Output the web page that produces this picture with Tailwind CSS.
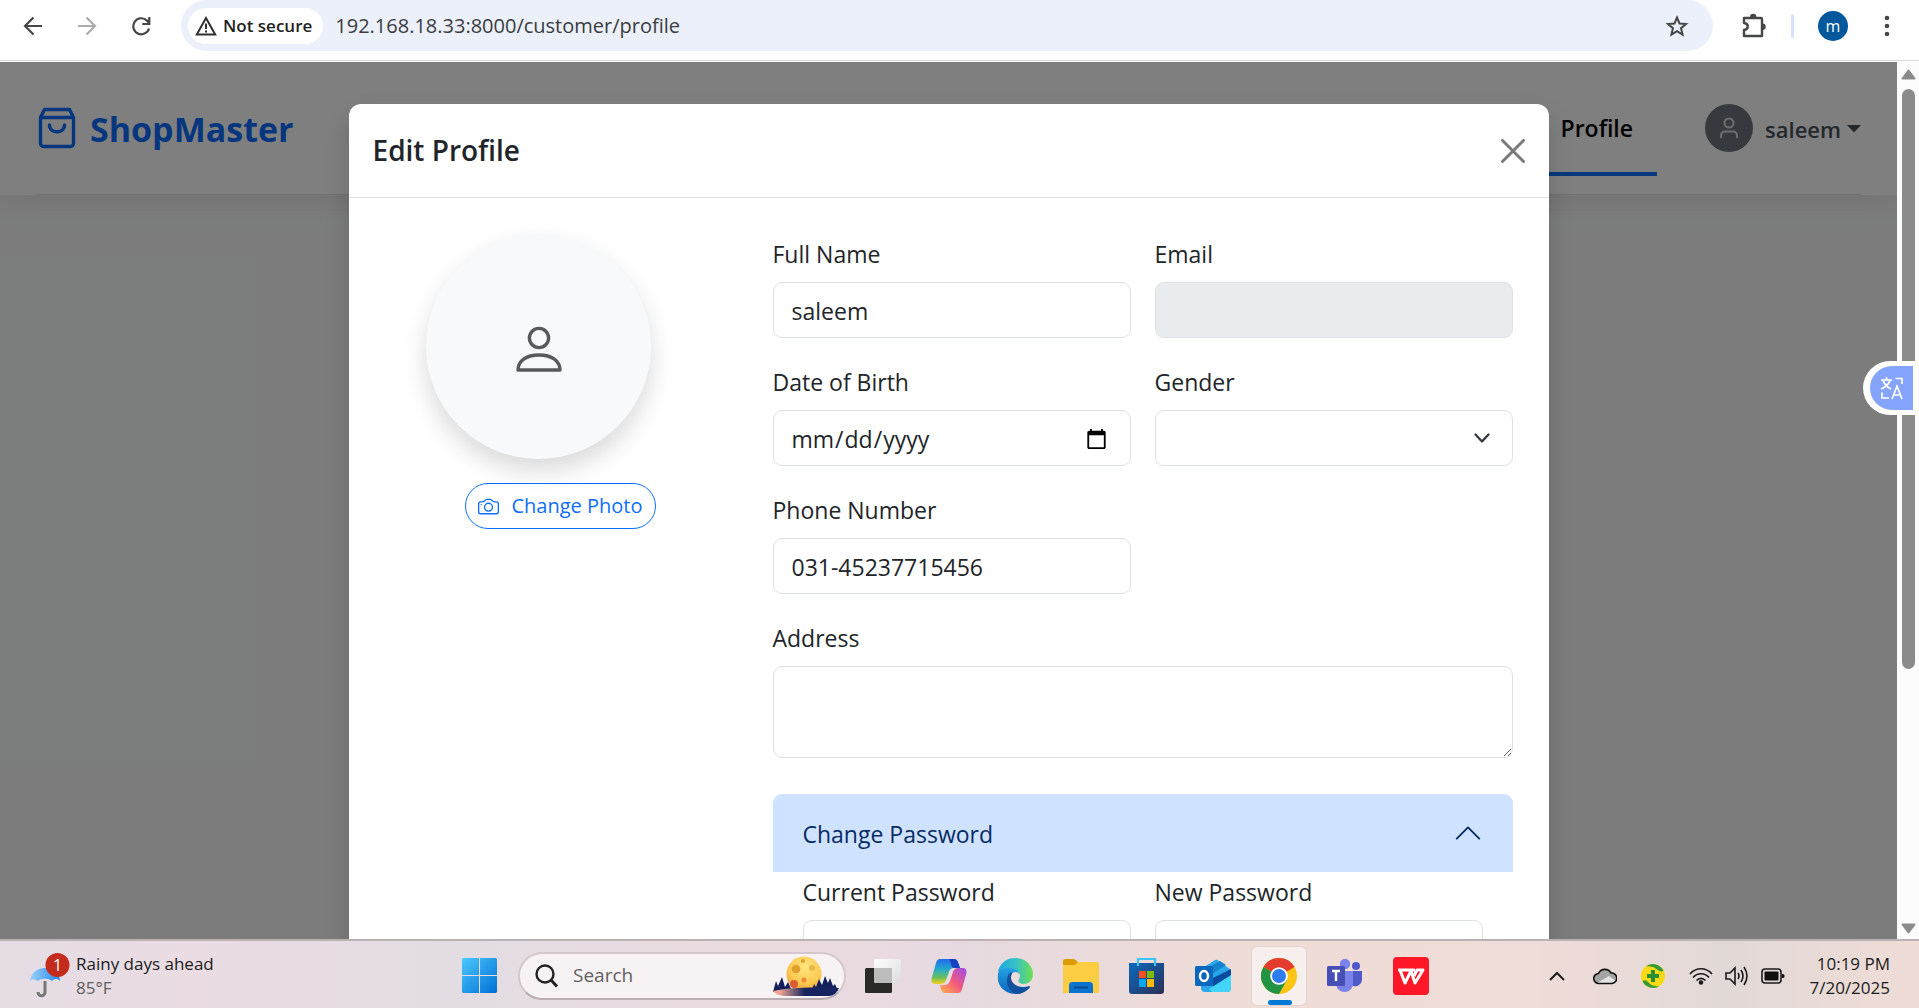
<!DOCTYPE html>
<html lang="en">
<head>
<meta charset="utf-8">
<title>ShopMaster - Profile</title>
<script src="https://cdn.jsdelivr.net/npm/@tailwindcss/browser@4"></script>
</head>
<body class="flex h-screen flex-col overflow-hidden bg-white font-['Open_Sans','Noto_Sans',sans-serif] text-[#212529]">

<!-- Browser toolbar -->
<div class="flex h-[61px] shrink-0 items-start border-b border-[#dcdcdc]">
  <div class="flex h-[51px] w-full items-center pr-[26px]">
    <button aria-label="Back" class="ml-[23px]"><svg class="size-5" viewBox="0 0 20 20" fill="none" stroke="#454746" stroke-width="2.2"><path d="M19 10H3M10.500 1.500 2 10l8.500 8.500"/></svg></button>
    <button aria-label="Forward" class="ml-[34px]"><svg class="size-5" viewBox="0 0 20 20" fill="none" stroke="#acacac" stroke-width="2.200"><path d="M1 10h16M9.500 1.500 18 10l-8.500 8.500"/></svg></button>
    <button aria-label="Reload" class="ml-[34px]"><svg class="size-5" viewBox="0 0 20 20" fill="none" stroke="#454746" stroke-width="2.200"><path d="M18 12.500A8 8 0 1 1 16 4.600L18 7M18.300 1v7h-7"/></svg></button>
    <div class="ml-[30px] flex h-[51px] flex-1 items-center rounded-full bg-[#ebf0fa] pr-[24px] pl-[7px]">
      <button class="flex h-9 items-center gap-[6px] rounded-full bg-white pr-[11px] pl-[7px] text-[17px] leading-6 font-semibold whitespace-nowrap text-[#1f1f1f]">
        <svg class="size-[22px]" viewBox="0 0 22 22" fill="none" stroke="#303030" stroke-width="2"><path d="M11 3 1.800 19.500h18.400z"/><path d="M11 8.500v5.500M11 15.500v2"/></svg>
        Not secure
      </button>
      <input aria-label="Address bar" value="192.168.18.33:8000/customer/profile" class="ml-3 min-w-0 flex-1 bg-transparent text-[20px] leading-7 text-[#3a3c3e] outline-none">
      <button aria-label="Bookmark"><svg class="size-6" viewBox="0 0 24 24" fill="none" stroke="#454746" stroke-width="2"><path d="m12 3.500 2.500 6 6.500.500-5 4.200 1.600 6.400L12 17.200l-5.600 3.400L8 14.200 3 10l6.500-.500z"/></svg></button>
    </div>
    <button aria-label="Extensions" class="ml-[27px]"><svg class="size-[27px]" viewBox="0 0 27 27"><path d="M4 6h17a1 1 0 0 1 1 1v17H4v-6c5-.500 5-6.500 0-7z" fill="none" stroke="#454746" stroke-width="2.400" stroke-linejoin="round"/><path d="M10 5a3.200 3.200 0 0 1 6.400 0zM22.500 11.500a3.200 3.200 0 0 1 0 6.400z" fill="#454746"/></svg></button>
    <span class="ml-6 h-6 w-[3px] rounded bg-[#d3e3fd]"></span>
    <button aria-label="Account" class="ml-6 size-[30px] rounded-full bg-[#01579b] text-[16px] leading-[28px] text-white">m</button>
    <button aria-label="Menu" class="ml-[33px]"><svg class="h-6 w-3" viewBox="0 0 12 24" fill="#454746"><circle cx="6" cy="4" r="2.300"/><circle cx="6" cy="12" r="2.300"/><circle cx="6" cy="20" r="2.300"/></svg></button>
  </div>
</div>

<!-- Page viewport -->
<div class="relative mt-px flex min-h-0 flex-1">
  <div class="relative min-w-0 flex-1 overflow-hidden bg-[#f8f9fa]">
    <header class="h-[133px] bg-white px-9 shadow-[0_4px_30px_rgba(0,0,0,0.1)]">
      <div class="flex h-full items-center border-b border-black/10">
        <a href="#" class="flex items-center gap-3 text-[34px] leading-[54px] font-bold text-[#0d6efd]">
          <svg class="h-[42px] w-[42px]" viewBox="0 0 42 42" fill="none" stroke="currentColor" stroke-width="3.400" stroke-linejoin="round" stroke-linecap="round"><path d="M8.500 2.500h25l4 8v26a3 3 0 0 1-3 3h-27a3 3 0 0 1-3-3v-26zM4.500 10.500h33M13.500 18c0 9 15 9 15 0"/></svg>
          <span class="pt-[2px]">ShopMaster</span>
        </a>
        <nav class="ml-auto">
          <a href="#" class="flex h-[96px] items-center border-b-4 border-[#0d6efd] px-6 pt-1 text-[23px] font-semibold text-black">Profile</a>
        </nav>
        <button class="ml-12 flex items-center gap-3 text-[22px] leading-9 font-semibold text-[#495057]">
          <span class="flex size-12 items-center justify-center rounded-full bg-[#6c757d]"><svg class="size-6" viewBox="0 0 24 24" fill="none" stroke="#dcdcdc" stroke-width="2"><circle cx="12" cy="7" r="4.500"/><path d="M4 22v-2.500a4 4 0 0 1 4-4h8a4 4 0 0 1 4 4V22"/></svg></span>
          <span class="flex items-center gap-[6px] pt-[2px]">saleem <svg class="h-2 w-[14px]" viewBox="0 0 14 8" fill="currentColor"><path d="M0 0h14L7 7.500z"/></svg></span>
        </button>
      </div>
    </header>

    <!-- Modal with backdrop -->
    <div class="absolute inset-0 overflow-hidden bg-black/50 pt-[42px]">
      <div role="dialog" aria-labelledby="dialog-title" class="mx-auto max-w-[1200px] rounded-xl bg-white shadow-[0_12px_24px_rgba(0,0,0,0.15)]">
        <div class="flex h-[94px] items-center justify-between border-b border-[#dee2e6] px-6">
          <h1 id="dialog-title" class="text-[28px] leading-[45px] font-semibold">Edit Profile</h1>
          <button aria-label="Close"><svg class="size-6" viewBox="0 0 24 24" fill="none" stroke="#7a7a7a" stroke-width="3" stroke-linecap="round"><path d="m1.500 1.500 21 21m0-21-21 21"/></svg></button>
        </div>
        <form class="grid grid-cols-[376px_minmax(0,1fr)] gap-6 pt-9 pr-9 pb-9 pl-6 text-[23px]">
          <div class="flex flex-col items-center gap-6">
            <div class="mr-11 flex size-[225px] items-center justify-center rounded-full bg-[#f8f9fa] pt-1 shadow-[0_12px_24px_rgba(0,0,0,0.15)]">
              <svg class="size-12" viewBox="0 0 48 48" fill="none" stroke="#58595b" stroke-width="3.400" stroke-linejoin="round"><circle cx="24" cy="13" r="9.600"/><path d="M3 45h42c0-9-8-15-21-15S3 36 3 45z"/></svg>
            </div>
            <button type="button" class="flex h-[46px] items-center gap-3 rounded-full border border-[#0d6efd] px-3 text-[20px] whitespace-nowrap text-[#0d6efd]">
              <svg class="size-[21px]" viewBox="0 0 16 16" fill="currentColor"><path d="M15 12a1 1 0 0 1-1 1H2a1 1 0 0 1-1-1V6a1 1 0 0 1 1-1h1.172a3 3 0 0 0 2.120-.879l.830-.828A1 1 0 0 1 6.827 3h2.344a1 1 0 0 1 .707.293l.828.828A3 3 0 0 0 12.828 5H14a1 1 0 0 1 1 1zM2 4a2 2 0 0 0-2 2v6a2 2 0 0 0 2 2h12a2 2 0 0 0 2-2V6a2 2 0 0 0-2-2h-1.172a2 2 0 0 1-1.414-.586l-.828-.828A2 2 0 0 0 9.172 2H6.828a2 2 0 0 0-1.414.586l-.828.828A2 2 0 0 1 3.172 4z"/><path d="M8 11a2.500 2.500 0 1 1 0-5 2.500 2.500 0 0 1 0 5m0 1a3.500 3.500 0 1 0 0-7 3.500 3.500 0 0 0 0 7M3 6.500a.5.500 0 1 1-1 0 .5.500 0 0 1 1 0"/></svg>
              Change Photo
            </button>
          </div>
          <div>
            <div class="grid grid-cols-2 gap-6">
              <div class="flex flex-col gap-2">
                <label for="name" class="leading-10">Full Name</label>
                <input id="name" value="saleem" class="h-14 w-full rounded-[9px] border border-[#dee2e6] px-[18px] pt-[2px]">
              </div>
              <div class="flex flex-col gap-2">
                <label for="email" class="leading-10">Email</label>
                <input id="email" type="email" disabled class="h-14 w-full rounded-[9px] border border-[#dee2e6] bg-[#e9ecef] px-[18px]">
              </div>
              <div class="flex flex-col gap-2">
                <label for="dob" class="leading-10">Date of Birth</label>
                <input id="dob" type="date" class="h-14 w-full rounded-[9px] border border-[#dee2e6] pt-[2px] pr-[20px] pl-[17px]">
              </div>
              <div class="flex flex-col gap-2">
                <label for="gender" class="leading-10">Gender</label>
                <div class="relative">
                  <select id="gender" class="block h-14 w-full appearance-none rounded-[9px] border border-[#dee2e6] bg-white px-[18px]"><option></option></select>
                  <svg class="pointer-events-none absolute top-5 right-[23px] size-4" viewBox="0 0 16 16" fill="none" stroke="#343a40" stroke-width="2.300" stroke-linecap="round" stroke-linejoin="round"><path d="m1.500 4.500 6.500 7 6.500-7"/></svg>
                </div>
              </div>
              <div class="flex flex-col gap-2">
                <label for="phone" class="leading-10">Phone Number</label>
                <input id="phone" type="tel" value="031-45237715456" class="h-14 w-full rounded-[9px] border border-[#dee2e6] px-[18px] pt-[2px]">
              </div>
              <div class="col-span-2 flex flex-col gap-2">
                <label for="address" class="leading-10">Address</label>
                <textarea id="address" class="block h-[92px] w-full resize-y rounded-[9px] border border-[#dee2e6] px-[18px] py-2"></textarea>
              </div>
            </div>
            <button type="button" aria-expanded="true" class="mt-9 flex h-[78px] w-full items-center justify-between rounded-t-[9px] bg-[#cfe2ff] px-[30px] text-[#052c65]">
              <span class="pt-[2px]">Change Password</span>
              <svg class="size-[30px]" viewBox="0 0 16 16" fill="none" stroke="#052c65" stroke-linecap="round" stroke-linejoin="round"><path d="m2 11 6-6 6 6"/></svg>
            </button>
            <div class="grid grid-cols-2 gap-6 px-[30px] pb-6">
              <div class="flex flex-col gap-2">
                <label for="current" class="leading-10">Current Password</label>
                <input id="current" type="password" class="h-14 w-full rounded-[9px] border border-[#dee2e6] px-[18px]">
              </div>
              <div class="flex flex-col gap-2">
                <label for="new" class="leading-10">New Password</label>
                <input id="new" type="password" class="h-14 w-full rounded-[9px] border border-[#dee2e6] px-[18px]">
              </div>
            </div>
          </div>
        </form>
      </div>
    </div>
  </div>

  <!-- Scrollbar -->
  <div class="flex w-[22px] shrink-0 flex-col items-center bg-[#fcfcfc] pt-[7px] pb-[5px]">
    <svg class="h-[11px] w-[15px]" viewBox="0 0 15 11" fill="#8b8b8b" stroke="#8b8b8b" stroke-width="2" stroke-linejoin="round"><path d="M7.500 1.500 1.500 9.500h12z"/></svg>
    <div class="mt-[9px] flex-1 self-center"><div class="h-[69.5%] w-[13px] rounded-full bg-[#8b8b8b]"></div></div>
    <svg class="h-[11px] w-[15px]" viewBox="0 0 15 11" fill="#8b8b8b" stroke="#8b8b8b" stroke-width="2" stroke-linejoin="round"><path d="M7.500 9.500 1.500 1.500h12z"/></svg>
  </div>

  <!-- Floating translate button -->
  <button aria-label="Translate" class="absolute top-[299px] right-0 h-[54px] w-[56px] rounded-l-full bg-white py-[5px] pr-[6px] pl-[7px]">
    <span class="flex h-[44px] items-center justify-center rounded-l-full rounded-r bg-[#84a4fd]">
      <svg class="size-6" viewBox="0 0 24 24" fill="none" stroke="#fff" stroke-width="1.700"><path d="M1 4h11M6.500 1v3M3 4c1 4 4 7 8 9M10 4c-1 4-4 7-9 9M15.500 2.500H22V8M2 16.500V22h7M12 23l5-13 5 13M13.500 19h7"/></svg>
    </span>
  </button>
</div>

<!-- Taskbar -->
<footer class="flex h-[69px] shrink-0 items-center border-t-2 border-[#b9b1b2] bg-[linear-gradient(90deg,#e5dde4_0%,#eadce2_10%,#e2dde3_24%,#ecdbdf_40%,#e6dae0_50%,#efdcd6_65%,#f0dcd8_80%,#e1d9d7_90%,#f0dcd6_100%)] pt-[2px] text-[#1b1b1b]">
  <div class="flex w-[462px] shrink-0 items-center gap-[6px] pl-[28px]">
    <svg class="h-[46px] w-[42px]" viewBox="0 0 42 46"><defs><linearGradient id="um" x1="0" x2="1"><stop stop-color="#9bd0ff"/><stop offset="1" stop-color="#2588e8"/></linearGradient></defs><path d="M17 28v11c0 5-7 5-7 0" fill="none" stroke="#777" stroke-width="3"/><path d="M2 28c1-8 7-13 15-13s15 5 15 13c-3-3-6-2-8 0-4-3-10-3-14 0-3-2-6-2-8 0z" fill="url(#um)"/><circle cx="29.500" cy="12" r="12" fill="#c42b1c"/><text x="29.500" y="18" fill="#fff" font-size="16" text-anchor="middle">1</text></svg>
    <div class="text-[17px] leading-6 whitespace-nowrap"><div>Rainy days ahead</div><div class="text-[#606060]">85°F</div></div>
  </div>
  <button aria-label="Start"><svg class="size-[35px]" viewBox="0 0 35 35"><defs><linearGradient id="win" x1="0" y1="0" x2="1" y2="1"><stop stop-color="#4cc8fd"/><stop offset="1" stop-color="#006fd6"/></linearGradient></defs><path d="M1 0h16v17H0V1zM18 0h16l1 1v16H18zM0 18h17v17H1l-1-1zM18 18h17v16l-1 1H18z" fill="url(#win)"/></svg></button>
  <div class="ml-[21px] flex h-12 w-[328px] items-center rounded-full border-2 border-[#d4c8cd] border-b-[#b9adb2] bg-[#f7f3f5] pr-1 pl-[15px]">
    <svg class="size-6 shrink-0" viewBox="0 0 24 24" fill="none" stroke="#222" stroke-width="2.400"><circle cx="10" cy="10" r="8.500"/><path d="m16 16 6 6.500" stroke-width="3"/></svg>
    <input type="search" aria-label="Search" placeholder="Search" class="ml-[14px] min-w-0 flex-1 bg-transparent text-[19px] outline-none placeholder:text-[#606060]">
    <svg class="h-10 w-[68px] shrink-0" viewBox="0 0 68 40"><defs><radialGradient id="moon" cx=".55" cy=".3" r=".8"><stop stop-color="#ffe680"/><stop offset=".6" stop-color="#fbc94f"/><stop offset="1" stop-color="#e88934"/></radialGradient><linearGradient id="lake"><stop offset=".1" stop-color="#f0a593"/><stop offset=".48" stop-color="#17245f"/></linearGradient></defs><circle cx="32" cy="18" r="17.500" fill="url(#moon)"/><g fill="#dfa02d"><circle cx="24" cy="13" r="4.300"/><circle cx="40" cy="12" r="3" opacity=".6"/><circle cx="31" cy="5" r="2"/><circle cx="32" cy="24" r="2.500" fill="#ef8b38"/><circle cx="22" cy="28" r="4" fill="#dd5a35"/></g><path d="m1 36 3-11 2 5 4-9 3 10 3-5 4 9 20-1 2-6 2 3 3-8 3 6 3-9 3 7 2-5 3 8 2-2 3 7z" fill="#14205c"/><path d="M1 35c15-4 45-4 66-3-2 5-6 8-10 8H15C8 40 3 38 1 35z" fill="url(#lake)"/></svg>
  </div>
  <div class="ml-[19px] flex items-center gap-[30px]">
    <button aria-label="Task view"><svg class="size-9" viewBox="0 0 36 36"><defs><linearGradient id="tv" x1="0" y1="0" x2="1" y2="1"><stop stop-color="#fff"/><stop offset="1" stop-color="#dcdcdc"/></linearGradient></defs><rect y="10" width="27" height="25" rx="1.500" fill="#292928"/><rect x="9" y="1" width="27" height="24" rx="1.500" fill="url(#tv)"/><path d="M9 10h18v15H10.500L9 23.500z" fill="#bcbcbc"/></svg></button>
    <button aria-label="Copilot"><svg class="size-9" viewBox="0 0 36 36"><defs><linearGradient id="ca" x1="0" y1="0" x2="0" y2="1"><stop stop-color="#2468e8"/><stop offset=".4" stop-color="#23a8d0"/><stop offset=".75" stop-color="#6fc05a"/><stop offset="1" stop-color="#f5d21b"/></linearGradient><linearGradient id="cb" x1="1" y1="0" x2="0" y2="1"><stop stop-color="#9b4df0"/><stop offset=".5" stop-color="#f0587f"/><stop offset="1" stop-color="#ffb34a"/></linearGradient></defs><path d="M9 1h14c3 0 4 3 5 6l1 3h-6c-4 0-5 3-6 7l-2 5c-1 3-3 4-6 4H4c-4 0-4-4-3-7L5 5c1-3 2-4 4-4z" fill="url(#ca)"/><path d="M18 1h5c3 0 4 3 5 6l1 3h-6c-2 0-3-3-3-5z" fill="#183fc0"/><path d="M27 35H14c-3 0-4-3-5-8h5c4 0 5-4 6-7l2-6c1-3 3-4 5-4h5c4 0 4 4 3 7l-4 14c-1 3-2 4-4 4z" fill="url(#cb)"/></svg></button>
    <button aria-label="Edge"><svg class="h-[38px] w-9" viewBox="0 0 36 38"><defs><linearGradient id="ea"><stop stop-color="#1ca7df"/><stop offset=".5" stop-color="#35c1c8"/><stop offset="1" stop-color="#6fe04e"/></linearGradient><linearGradient id="eb" x1="0" y1="0" x2="0" y2="1"><stop stop-color="#2aa8e8"/><stop offset="1" stop-color="#0865bd"/></linearGradient></defs><path d="M33 29.500C27 38 15 39.500 7 33-1 27-1 15 5 8l16 2 2 18z" fill="url(#eb)"/><path d="M1 14C4 5 10 1 18 1c11 0 18 8 18 16 0 7-5 10-10 10-4 0-6-2-4-4 4-7-4-13-12-12-5 0-8 3-9 3z" fill="url(#ea)"/><path d="M14 15c-7 5-5 19 6 22 5 0 10-3 13-7l-1-1c-9 4-17-1-16-9z" fill="#10509e"/><path d="M18 15c4 0 5 3 4 7-2 4 3 6 8 5l4-2-2 4c-9 3-18-1-18-9 0-3 2-5 4-5z" fill="#ecdcdb"/></svg></button>
    <button aria-label="File Explorer"><svg class="size-9" viewBox="0 0 36 36"><path d="M0 3c0-1 1-2 2-2h9l4 3v6H0z" fill="#dc9a05"/><path d="M0 7h12l3-3h19c1 0 2 1 2 2v29H0z" fill="#fccd43"/><path d="M6 35v-7c0-3 1-4 4-4h16c3 0 4 1 4 4v7z" fill="#0b72cd"/><path d="M11 29.500h14" stroke="#074d94" stroke-width="2"/></svg></button>
    <button aria-label="Microsoft Store"><svg class="h-[38px] w-9" viewBox="0 0 36 38"><defs><linearGradient id="st" x1="0" y1="0" x2="1" y2="1"><stop stop-color="#0b6abf"/><stop offset="1" stop-color="#2c2f55"/></linearGradient></defs><path d="M0 6h35v28c0 2-1 3-3 3H3c-2 0-3-1-3-3z" fill="url(#st)"/><path d="M9 9V2h17v7" fill="none" stroke="#3cc4f4" stroke-width="2.200"/><path d="M10 14h7v7h-7z" fill="#f25022"/><path d="M18 14h7v7h-7z" fill="#7fba00"/><path d="M10 22h7v8h-7z" fill="#00a4ef"/><path d="M18 22h7v8h-7z" fill="#ffb900"/></svg></button>
    <button aria-label="Outlook"><svg class="size-9" viewBox="0 0 36 36"><path d="M6 11 20 2q2-1 4 1l12 9v18a4 4 0 0 1-4 4H10q-4 0-4-4z" fill="#28a8ea"/><path d="m18 20 18-9v8L18 31z" fill="#074aa0"/><path d="m36 17-22 14 3 3h15a4 4 0 0 0 4-4z" fill="#42d4fa"/><path d="m13 10 12-7 6 4-14 9z" fill="#1583cc"/><rect y="8" width="18" height="20" rx="1.500" fill="#0967be"/><ellipse cx="9" cy="18" rx="4" ry="5" fill="none" stroke="#fff" stroke-width="2.500"/></svg></button>
    <button aria-label="Chrome" class="relative -mx-[10px] flex h-[60px] w-14 items-center justify-center rounded-md border border-[#e2d4d2] bg-[#f7efed]"><svg class="h-[38px] w-9" viewBox="0 0 36 36"><circle cx="18" cy="18" r="18" fill="#fcc514"/><path d="M18 18 2.400 9A18 18 0 0 1 33.600 9z" fill="#e33b2e"/><path d="M18 18 2.400 9A18 18 0 0 0 18 36l8-14z" fill="#229342"/><path d="M18 9h15.600L20 5z" fill="#e33b2e"/><circle cx="18" cy="18" r="8.800" fill="#fff"/><circle cx="18" cy="18" r="7" fill="#2d7df0"/></svg><span class="absolute bottom-0 left-4 h-[5px] w-6 rounded-full bg-[#0078d4]"></span></button>
    <button aria-label="Teams"><svg class="size-9" viewBox="0 0 36 36"><circle cx="29" cy="8" r="4" fill="#5059c9"/><path d="M24 13h11v9a7 7 0 0 1-11 5z" fill="#5059c9"/><circle cx="18" cy="6" r="5.200" fill="#7b83eb"/><path d="M9 13h17v12c0 12-17 12-17 0z" fill="#7b83eb"/><rect y="8" width="18" height="20" rx="1.500" fill="#474eb5"/><path d="M5 13h8M9 13v10" stroke="#fff" stroke-width="2.400"/></svg></button>
    <button aria-label="WPS Office"><svg class="h-[38px] w-9" viewBox="0 0 36 38"><rect width="36" height="38" rx="4" fill="#fe1726"/><path d="M5 13h17M7 13l5 13 6-12 4 12 8-13h-6l-3 6" fill="none" stroke="#fff" stroke-width="3" stroke-linejoin="round"/></svg></button>
  </div>
  <div class="ml-auto flex items-center pr-[29px]">
    <svg class="h-3 w-4" viewBox="0 0 16 12" fill="none" stroke="#1b1b1b" stroke-width="2"><path d="m1 10 7-7 7 7"/></svg>
    <svg class="ml-7 h-[18px] w-6" viewBox="0 0 24 18"><path d="M6 16.500a5 5 0 0 1-.500-10A7 7 0 0 1 18 6a5 5 0 0 1 1 10.500z" fill="#a4a4a4"/><path d="M4 16 16 9l7 5-3 2.500H6z" fill="#e3e3e3"/><path d="M6 16.500a5 5 0 0 1-.500-10A7 7 0 0 1 18 6a5 5 0 0 1 1 10.500z" fill="none" stroke="#111" stroke-width="1.600"/></svg>
    <svg class="ml-6 size-6" viewBox="0 0 24 24"><circle cx="12" cy="12" r="12" fill="#fbd914"/><path d="M5 2.300A12 12 0 0 1 22.500 6.500q-2 2-5 0Q12 1.500 5 2.300zM1.500 17.500q3-3 6 1 5 5 11 3.500A12 12 0 0 1 1.500 17.500z" fill="#37993a"/><path d="M12 6v12M6 12h12" stroke="#258f32" stroke-width="4"/></svg>
    <svg class="ml-6 size-6" viewBox="0 0 24 24" fill="none" stroke="#1b1b1b" stroke-width="1.700"><path d="M1 10c6-7 16-7 22 0M4 13.500c4.500-5 11.500-5 16 0M7.500 16.500c3-3 6-3 9 0"/><circle cx="12" cy="18.500" r="1.500" fill="#1b1b1b"/></svg>
    <svg class="ml-3 size-6" viewBox="0 0 24 24" fill="none" stroke="#1b1b1b" stroke-width="1.600"><path d="M1 9h4l5-5v16l-5-5H1zM13 9q2 3 0 6M16 6q4 6 0 12M19 3q6 9 0 18"/></svg>
    <svg class="ml-3 size-6" viewBox="0 0 24 24"><rect x="1" y="5" width="19" height="14" rx="3" fill="none" stroke="#1b1b1b" stroke-width="1.600"/><rect x="3.500" y="7.500" width="14" height="9" rx="1" fill="#111"/><path d="M21 10h1a1.500 1.500 0 0 1 1.500 1.500v1A1.500 1.500 0 0 1 22 14h-1z" fill="#111"/></svg>
    <div class="ml-6 text-right text-[17px] leading-6 whitespace-nowrap"><div>10:19 PM</div><div>7/20/2025</div></div>
  </div>
</footer>
</body>
</html>
